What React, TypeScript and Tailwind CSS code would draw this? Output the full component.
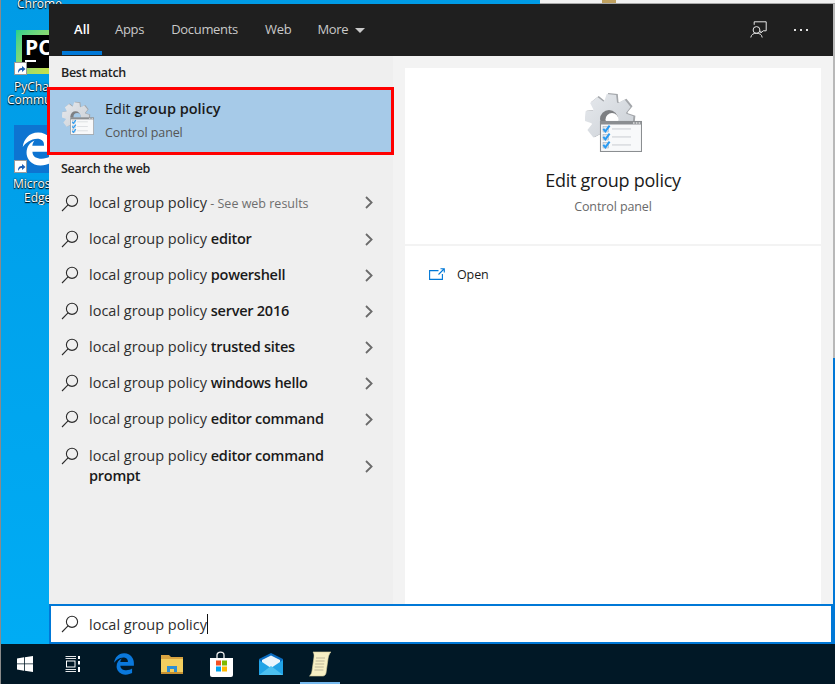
import { FaEdgeLegacy } from "react-icons/fa6";

function gearPoints(cx: number, cy: number, outer: number, inner: number, teeth: number) {
  const pts: string[] = [];
  const step = (Math.PI * 2) / teeth;
  for (let i = 0; i < teeth; i++) {
    const a = i * step - Math.PI / 2 + 0.1;
    const offs: [number, number][] = [
      [-0.5, inner],
      [-0.27, outer],
      [0.27, outer],
      [0.5, inner],
    ];
    for (const [o, r] of offs) {
      const t = a + o * step * 0.92;
      pts.push(`${(cx + Math.cos(t) * r).toFixed(2)},${(cy + Math.sin(t) * r).toFixed(2)}`);
    }
  }
  return pts.join(" ");
}

function Check({ y }: { y: number }) {
  return (
    <g>
      <rect x="18" y={y} width="5.5" height="5.5" fill="#dfe6ee" stroke="#9aa6b2" strokeWidth="0.5" />
      <path d={`M18.3 ${y + 2.4} L20.4 ${y + 4.9} L24.6 ${y - 0.8}`} fill="none" stroke="#2a9bf2" strokeWidth="2" />
      <rect x="27" y={y + 2} width="19" height="0.9" fill="#c4c8cc" />
    </g>
  );
}

function PolicyIcon({ id, hole, className }: { id: string; hole: string; className: string }) {
  return (
    <svg viewBox="0 0 57 60" className={className}>
      <defs>
        <linearGradient id={id} x1="0" y1="0" x2="1" y2="1">
          <stop offset="0" stopColor="#e6e9ed" />
          <stop offset="1" stopColor="#c9ced4" />
        </linearGradient>
      </defs>
      <polygon points={gearPoints(25.5, 26, 25, 18, 8)} fill="#a3a6aa" />
      <polygon points={gearPoints(24, 26.5, 24.5, 18, 8)} fill={`url(#${id})`} />
      <circle cx="24" cy="27" r="9" fill="#7d7f82" />
      <circle cx="27" cy="27.5" r="6.5" fill={hole} />
      <rect x="15.5" y="29.5" width="41" height="30" fill="#f8f9fa" stroke="#8b8e91" strokeWidth="1.1" />
      <rect x="15.5" y="29.5" width="41" height="3" fill="#8b8e91" />
      <rect x="48" y="30.3" width="1.6" height="1.4" fill="#e5e5e5" />
      <rect x="50.8" y="30.3" width="1.6" height="1.4" fill="#e5e5e5" />
      <rect x="53.6" y="30.3" width="1.6" height="1.4" fill="#e5e5e5" />
      <Check y={34.5} />
      <Check y={42.5} />
      <Check y={50.5} />
    </svg>
  );
}

function SearchIcon() {
  return (
    <svg viewBox="0 0 18 18" className="h-[18px] w-[18px] shrink-0" fill="none" stroke="#2b2b2b" strokeWidth="1.1">
      <circle cx="11" cy="6.8" r="5.6" />
      <path d="M7 10.8 L1 17" />
    </svg>
  );
}

function Chevron() {
  return (
    <svg viewBox="0 0 8 13" className="h-[13px] w-[8px] shrink-0" fill="none" stroke="#6b6b6b" strokeWidth="1.8">
      <path d="M1 1 L6.6 6.5 L1 12" />
    </svg>
  );
}

function ShortcutBadge() {
  return (
    <div className="flex h-[13px] w-[13px] items-center justify-center border border-[#9a9a9a] bg-white">
      <svg viewBox="0 0 10 10" className="h-[10px] w-[10px]">
        <path d="M2 9 C2 5 3.5 4 6 4 L6 2 L9.5 5 L6 8 L6 6 C4.5 6 3.5 6.5 2 9 Z" fill="#1f5fb5" />
      </svg>
    </div>
  );
}

function DesktopLabel({ text, className }: { text: string; className: string }) {
  return (
    <div className={`absolute overflow-hidden whitespace-nowrap text-[12px] leading-[14px] text-white [text-shadow:0_0_2px_#000,0_1px_1px_#000] ${className}`}>
      {text}
    </div>
  );
}

function Row({ bold, suffix, first }: { bold?: string; suffix?: string; first?: boolean }) {
  return (
    <div className={`flex items-center pl-[12px] pr-[20px] ${first ? "h-[37px]" : "h-[36px]"}`}>
      <SearchIcon />
      <div className="ml-[10px] flex-1 whitespace-nowrap text-[14.5px] text-[#2e2e2e]">
        local group policy{bold ? " " : ""}
        {bold ? <span className="font-semibold tracking-[-0.25px] text-[#1a1a1a]">{bold}</span> : null}
        {suffix ? <span className="text-[12.5px] text-[#6e6e6e]"> {suffix}</span> : null}
      </div>
      <Chevron />
    </div>
  );
}

const tabs = ["Apps", "Documents", "Web"];

export default function App() {
  return (
    <div className="relative flex h-[684px] w-[835px] flex-col overflow-hidden border-l border-[#8a8a8a] bg-gradient-to-b from-[#009be6] to-[#00adf5] font-['Open_Sans',sans-serif]">
      {/* desktop icons */}
      <DesktopLabel text="Chrome" className="left-[16px] top-[-3px]" />
      <div className="absolute left-[15px] top-[30px] flex h-[44px] w-[40px] items-end justify-end bg-gradient-to-br from-[#1fd18c] to-[#d5e23a]">
        <div className="mb-[6px] flex h-[33px] w-[34px] flex-col bg-black pl-[3px] text-[21px] font-bold leading-[24px] text-white">
          PC
          <div className="mt-px h-[2px] w-[11px] bg-white" />
        </div>
      </div>
      <div className="absolute left-[13px] top-[62px]">
        <ShortcutBadge />
      </div>
      <DesktopLabel text="PyCharm" className="left-[13px] top-[80px] w-[35px]" />
      <DesktopLabel text="Community" className="left-[6px] top-[93px] w-[42px]" />
      <div className="absolute left-[13px] top-[125px] flex h-[48px] w-[36px] items-center justify-start overflow-hidden bg-[#0d74d1] pl-[7px]">
        <FaEdgeLegacy className="h-[34px] w-[34px] shrink-0 text-white" />
      </div>
      <div className="absolute left-[13px] top-[160px]">
        <ShortcutBadge />
      </div>
      <DesktopLabel text="Microsoft" className="left-[12px] top-[177px] w-[36px]" />
      <DesktopLabel text="Edge" className="left-[23px] top-[191px] w-[25px]" />

      {/* window behind, along the top */}
      <div className="absolute left-[539px] top-0 z-0 h-[4px] w-[296px] border-b border-[#a8a8a8] bg-[#f0f0f0]">
        <div className="ml-[62px] h-[3px] w-[14px] bg-[#bfa05f]" />
      </div>

      <div className="relative z-10 flex h-[644px] pl-[48px] pt-[4px]">
        <div className="flex w-[784px] flex-col">
          {/* header */}
          <div className="flex h-[52px] items-start bg-[#1f1f1f] pl-[13px] pr-[25px] text-[13px] text-[#c9c9c9]">
            <div className="flex h-[51px] w-[40px] items-center justify-center border-b-[4px] border-[#0078d7] pt-[4px] font-semibold text-white">
              All
            </div>
            <div className="ml-[13px] flex h-[51px] items-center gap-[26px] pt-px tracking-[-0.3px]">
              <span className="flex items-center gap-[27px]">
                {tabs.map((t) => (
                  <span key={t}>{t}</span>
                ))}
              </span>
              <span className="flex items-center gap-[7px]">
                More
                <svg viewBox="0 0 10 5" className="h-[5px] w-[10px]">
                  <path d="M0 0 H10 L5 5 Z" fill="#c9c9c9" />
                </svg>
              </span>
            </div>
            <div className="ml-auto flex h-[51px] items-center gap-[27px]">
              <svg viewBox="0 0 17 17" className="h-[17px] w-[17px]" fill="none" stroke="#e6e6e6" strokeWidth="1">
                <circle cx="6.5" cy="9" r="3.4" />
                <path d="M0.8 16.5 C1.2 13.6 3.4 12.2 6.5 12.2 C9.6 12.2 11.8 13.6 12.2 16.5" />
                <path d="M4.2 3.8 V0.8 H16.2 V9.8 H13.2 L10.8 12 V9.8" />
              </svg>
              <div className="flex gap-[4px]">
                <div className="h-[2px] w-[2px] bg-[#e0e0e0]" />
                <div className="h-[2px] w-[2px] bg-[#e0e0e0]" />
                <div className="h-[2px] w-[2px] bg-[#e0e0e0]" />
              </div>
            </div>
          </div>

          {/* body */}
          <div className="flex min-h-0 flex-1 bg-[#f3f3f3]">
            <div className="w-[344px] shrink-0 bg-[#efefef]">
              <div className="flex h-[31px] items-center pl-[12px] pt-[3px] text-[12.5px] font-semibold tracking-[-0.3px] text-[#222]">Best match</div>
              <div className="-ml-[2px] flex h-[68px] w-[347px] border-[3px] border-[#ff0000] bg-[#a6cae8]">
                <PolicyIcon id="gearSmall" hole="#a6cae8" className="ml-[12px] mt-[11px] h-[34px] w-[32px]" />
                <div className="ml-[11px] pt-[8px]">
                  <div className="text-[14.5px] leading-[22px] text-[#1a1a1a]">
                    Edit <span className="font-semibold">group policy</span>
                  </div>
                  <div className="mt-[4px] text-[12.5px] leading-[18px] tracking-[-0.1px] text-[#555]">Control panel</div>
                </div>
              </div>
              <div className="flex h-[27px] items-center pl-[12px] pt-[1px] text-[12.5px] font-semibold tracking-[-0.25px] text-[#222]">Search the web</div>
              <div className="pt-[2px]">
                <Row first suffix="- See web results" />
                <Row bold="editor" />
                <Row bold="powershell" />
                <Row bold="server 2016" />
                <Row bold="trusted sites" />
                <Row bold="windows hello" />
                <Row bold="editor command" />
                <div className="flex items-center pl-[12px] pr-[20px] pt-[9px]">
                  <div className="self-start pt-[1px]">
                    <SearchIcon />
                  </div>
                  <div className="ml-[10px] flex-1 text-[14.5px] leading-[20px] text-[#2e2e2e]">
                    local group policy <span className="font-semibold tracking-[-0.25px] text-[#1a1a1a]">editor command prompt</span>
                  </div>
                  <Chevron />
                </div>
              </div>
            </div>
            <div className="flex flex-1 px-[12px] pt-[12px]">
              <div className="flex flex-1 flex-col bg-white">
                <div className="flex h-[178px] flex-col items-center border-b-2 border-[#f3f3f3] pt-[24px]">
                  <PolicyIcon id="gearLarge" hole="#ffffff" className="h-[60px] w-[57px]" />
                  <div className="mt-[15px] text-[18px] leading-[26px] tracking-[-0.25px] text-[#1a1a1a]">Edit group policy</div>
                  <div className="mt-[5px] text-[12.5px] leading-[18px] tracking-[-0.1px] text-[#6a6a6a]">Control panel</div>
                </div>
                <div className="flex items-center pl-[24px] pt-[20px]">
                  <svg viewBox="0 0 16 12" className="mb-[3px] h-[12px] w-[16px]" fill="none" stroke="#0078d7" strokeWidth="1.1">
                    <path d="M9.5 2.6 H0.6 V11.4 H13.4 V6" />
                    <path d="M9.5 6.5 L15 1 M11.5 0.7 H15.3 V4.5" />
                  </svg>
                  <span className="ml-[12px] text-[12.5px] tracking-[-0.1px] text-[#1a1a1a]">Open</span>
                </div>
              </div>
            </div>
          </div>

          {/* search box */}
          <div className="flex h-[40px] items-center border-2 border-[#0078d7] bg-white pl-[10px]">
            <SearchIcon />
            <span className="ml-[10px] pt-[2px] text-[14.5px] text-[#2e2e2e]">local group policy</span>
            <div className="h-[20px] w-px bg-[#111]" />
          </div>
        </div>
        {/* right edge of the window behind */}
        <div className="flex w-[2px] flex-col">
          <div className="h-[354px] bg-[#b8b8b8]" />
          <div className="flex-1 bg-[#0078d7]" />
        </div>
      </div>

      {/* taskbar */}
      <div className="relative flex flex-1 items-center bg-[#011826] pb-[1px]">
        <div className="flex w-[48px] justify-center">
          <svg viewBox="0 0 16 16" className="h-[16px] w-[16px]" fill="#fff">
            <path d="M0 2.4 L7 1.3 V7.5 H0 Z M7.8 1.2 L16 0 V7.5 H7.8 Z M0 8.3 H7 V14.7 L0 13.6 Z M7.8 8.3 H16 V16 L7.8 14.8 Z" />
          </svg>
        </div>
        <div className="flex w-[48px] justify-center">
          <svg viewBox="0 0 16 16" className="h-[16px] w-[16px]" fill="none" stroke="#fff" strokeWidth="1">
            <path d="M0.5 0.5 H11 M0.5 15.5 H11 M0.5 2.5 H11 M0.5 13.5 H11" strokeWidth="0.9" />
            <rect x="1.5" y="5" width="8.5" height="6" />
            <path d="M14 0 V3 M14 5 V8.5 M14 11 V16" strokeWidth="2" />
          </svg>
        </div>
        <div className="ml-[3px] flex w-[48px] justify-center">
          <FaEdgeLegacy className="h-[22px] w-[22px] text-[#0a78dc]" />
        </div>
        <div className="flex w-[48px] justify-center">
          <svg viewBox="0 0 22 20" className="h-[20px] w-[22px]">
            <path d="M0 1 H8 L10 3 H22 V6 H0 Z" fill="#d9a441" />
            <path d="M0 5 H22 V19 H0 Z" fill="#f3cf5f" />
            <path d="M0 18 H22 V20 H0 Z" fill="#c79233" />
            <path d="M6 18 V12 H16 V18 H13 V15 H9 V18 Z" fill="#2d8fd5" />
          </svg>
        </div>
        <div className="flex w-[50px] justify-center">
          <svg viewBox="0 0 23 26" className="h-[26px] w-[23px]">
            <path d="M7 8 V4 C7 0.2 14 0.2 14 4 V8" fill="none" stroke="#f2f2f2" strokeWidth="1.3" />
            <path d="M0 7 H23 V24 Q23 26 21 26 H2 Q0 26 0 24 Z" fill="#fff" />
            <rect x="6" y="9.5" width="5" height="5" fill="#f25022" />
            <rect x="12" y="9.5" width="5" height="5" fill="#7fba00" />
            <rect x="6" y="15.5" width="5" height="5" fill="#00a4ef" />
            <rect x="12" y="15.5" width="5" height="5" fill="#ffb900" />
          </svg>
        </div>
        <div className="flex w-[50px] justify-center">
          <svg viewBox="0 0 24 22" className="h-[22px] w-[24px]">
            <path d="M0 6 L12 0 L24 6 V22 H0 Z" fill="#0a6cc0" />
            <path d="M3 7 L12 2.5 L21 7 V12 L12 17 L3 12 Z" fill="#eaf5fc" />
            <path d="M0 7 L12 15 L24 7 V22 H0 Z" fill="#21a3e6" />
            <path d="M0 22 L12 13 L24 22 Z" fill="#4cc0f0" />
          </svg>
        </div>
        <div className="ml-[4px] flex w-[40px] justify-center">
          <svg viewBox="0 0 22 26" className="h-[26px] w-[22px]">
            <path d="M4 1 H22 C20 3 19.5 5 19 8 L17 22 C16.8 24 15 25 14 25 H0.5 C2 24 2.6 22 3 20 L5 6 C5.2 4 5 2 4 1 Z" fill="#f7efc4" stroke="#d9cf9c" strokeWidth="0.6" />
            <path d="M7 7 H16 M6.6 10 H15.6 M6.2 13 H15.2 M5.8 16 H14.8 M5.4 19 H14.4" stroke="#a8a28a" strokeWidth="0.7" />
          </svg>
        </div>
        <div className="absolute bottom-0 left-[299px] h-[2px] w-[40px] bg-[#76b9ed]" />
      </div>
    </div>
  );
}
